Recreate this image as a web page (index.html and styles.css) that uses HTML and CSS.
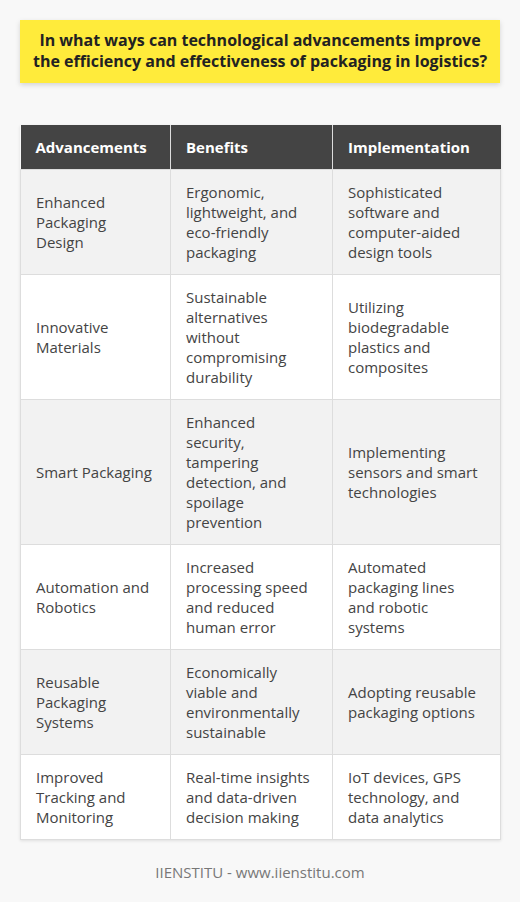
FILE: index.html
```html
<!DOCTYPE html>
<html>
<head>
<meta charset="utf-8">
<link rel="stylesheet" href="styles.css">
</head>
<body>
<div class="page">
  <div class="title">In what ways can technological advancements improve the efficiency and effectiveness of packaging in logistics?</div>
  <table class="grid">
    <colgroup><col class="c1"><col class="c2"><col class="c3"></colgroup>
    <thead>
      <tr><th>Advancements</th><th>Benefits</th><th>Implementation</th></tr>
    </thead>
    <tbody>
      <tr><td>Enhanced Packaging Design</td><td>Ergonomic, lightweight, and eco-friendly packaging</td><td>Sophisticated software and computer-aided design tools</td></tr>
      <tr><td>Innovative Materials</td><td>Sustainable alternatives without compromising durability</td><td>Utilizing biodegradable plastics and composites</td></tr>
      <tr><td>Smart Packaging</td><td>Enhanced security, tampering detection, and spoilage prevention</td><td>Implementing sensors and smart technologies</td></tr>
      <tr><td>Automation and Robotics</td><td>Increased processing speed and reduced human error</td><td>Automated packaging lines and robotic systems</td></tr>
      <tr><td>Reusable Packaging Systems</td><td>Economically viable and environmentally sustainable</td><td>Adopting reusable packaging options</td></tr>
      <tr><td>Improved Tracking and Monitoring</td><td>Real-time insights and data-driven decision making</td><td>IoT devices, GPS technology, and data analytics</td></tr>
    </tbody>
  </table>
  <div class="footer">IIENSTITU - www.iienstitu.com</div>
</div>
</body>
</html>
```
FILE: styles.css
```css
html, body {
  margin: 0;
  padding: 0;
  background: #f8f8f8;
}
.page {
  padding: 20px;
  font-family: "Open Sans", "Liberation Sans", sans-serif;
}
.title {
  background: #ffeb3b;
  color: #222;
  font-weight: 700;
  font-size: 16px;
  line-height: 21px;
  text-align: center;
  padding: 10px 10px 11px;
  box-shadow: 0 2px 5px rgba(0,0,0,0.15);
  margin-bottom: 42px;
}
.grid {
  width: 480px;
  border-collapse: collapse;
  table-layout: fixed;
  box-shadow: 0 1px 3px rgba(0,0,0,0.1);
}
.c1 { width: 150px; }
.c2 { width: 162px; }
.c3 { width: 168px; }
.grid th {
  background: #444;
  color: #fff;
  font-weight: 700;
  font-size: 15px;
  line-height: 20px;
  text-align: left;
  padding: 12px 15px;
  border-right: 1px solid #ddd;
}
.grid th:last-child { border-right: none; }
.grid td {
  font-size: 15px;
  line-height: 20px;
  color: #444;
  padding: 12px 15px;
  border: 1px solid #ddd;
  vertical-align: middle;
}
.grid tbody tr:nth-child(odd) td { background: #f2f2f2; }
.grid tbody tr:nth-child(even) td { background: #fff; }
.footer {
  margin-top: 22px;
  text-align: center;
  color: #777;
  font-size: 15px;
  line-height: 20px;
}
```
